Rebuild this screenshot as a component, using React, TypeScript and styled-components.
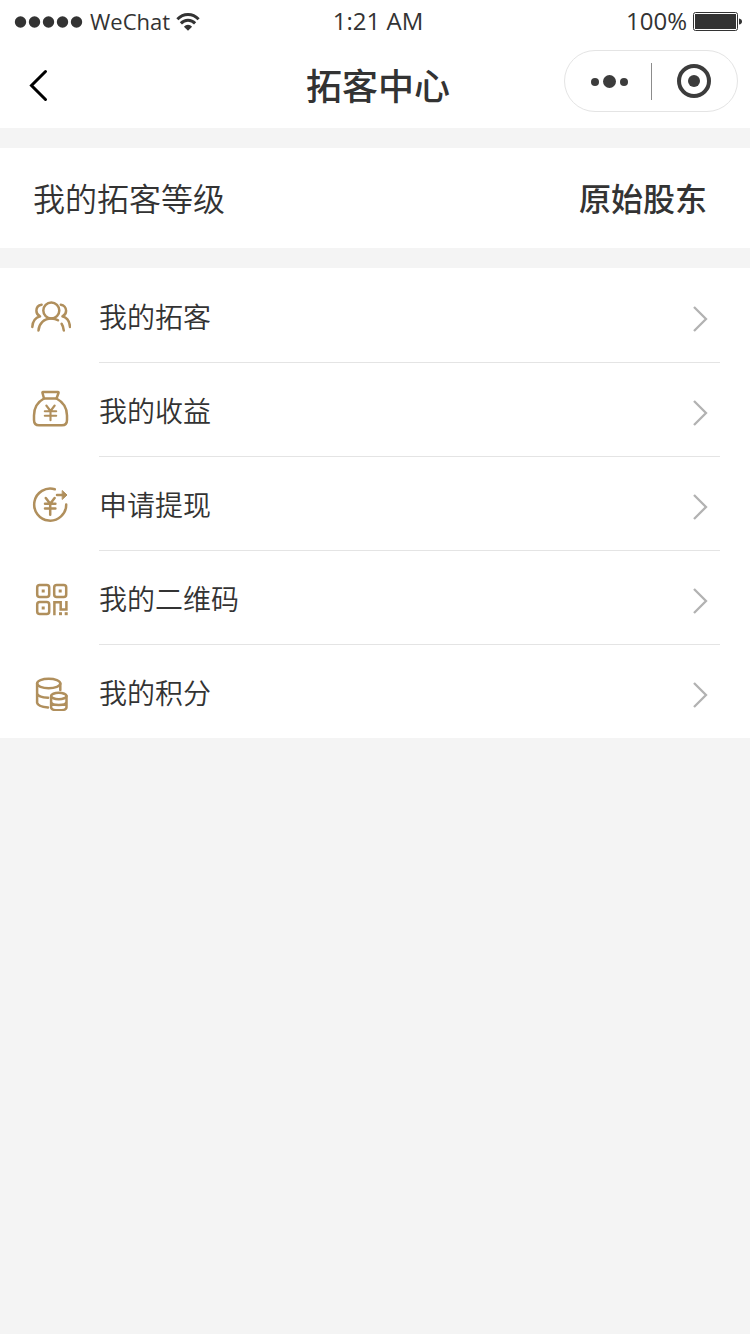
import React from "react";
import styled, { createGlobalStyle } from "styled-components";

const GlobalStyle = createGlobalStyle`
  * { box-sizing: border-box; }
  body {
    margin: 0;
    background: #f4f4f4;
    color: #333;
    font-family: "Noto Sans", "Noto Sans CJK SC", sans-serif;
  }
`;

const Header = styled.header`
  background: #fff;
`;

const StatusBar = styled.div`
  display: grid;
  grid-template-columns: 1fr auto 1fr;
  align-items: center;
  height: 44px;
  padding: 0 8px 0 14px;
`;

const StatusGroup = styled.div<{ $end?: boolean }>`
  display: flex;
  align-items: center;
  justify-content: ${(p) => (p.$end ? "flex-end" : "flex-start")};
  gap: 6px;
`;

const StatusText = styled.span<{ $small?: boolean }>`
  padding-bottom: 2px;
  font-family: "Open Sans", sans-serif;
  font-size: ${(p) => (p.$small ? 22 : 24)}px;
  line-height: 32px;
`;

const NavBar = styled.div`
  display: grid;
  grid-template-columns: 1fr auto 1fr;
  align-items: center;
  height: 84px;
  padding: 0 12px 0 18px;
`;

const IconButton = styled.button`
  display: flex;
  align-items: center;
  justify-content: center;
  height: 60px;
  padding: 0;
  border: 0;
  background: none;
  color: #3c3c3c;
  cursor: pointer;
`;

const BackButton = styled(IconButton)`
  width: 40px;
  color: #000;
`;

const Title = styled.h1`
  margin: 0;
  padding-bottom: 4px;
  font-family: "Noto Sans CJK SC", sans-serif;
  font-size: 36px;
  font-weight: 500;
  line-height: 52px;
`;

const Capsule = styled.div`
  display: flex;
  align-items: center;
  justify-self: end;
  width: 174px;
  height: 62px;
  margin-bottom: 10px;
  border: 1px solid #e4e4e4;
  border-radius: 31px;

  ${IconButton} {
    flex: 1;
  }
`;

const CapsuleDivider = styled.span`
  width: 1px;
  height: 37px;
  background: #8c8c8c;
`;

const Main = styled.main`
  display: flex;
  flex-direction: column;
  gap: 20px;
  padding-top: 20px;
`;

const LevelCard = styled.section`
  display: flex;
  align-items: center;
  justify-content: space-between;
  height: 100px;
  padding: 0 43px 2px 33px;
  background: #fff;
  font-family: "Noto Sans CJK SC", sans-serif;
  font-size: 32px;
  line-height: 48px;
`;

const LevelName = styled.span`
  font-weight: 350;
`;

const LevelValue = styled.strong`
  font-weight: 500;
`;

const Menu = styled.ul`
  margin: 0;
  padding: 0;
  list-style: none;
  background: #fff;
`;

const RowBody = styled.span`
  display: flex;
  flex: 1;
  align-items: center;
  justify-content: space-between;
  height: 94px;
  padding-right: 10px;
  border-top: 1px solid #e4e4e4;
`;

const MenuItem = styled.li`
  &:first-child ${RowBody} {
    border-top-color: transparent;
  }
`;

const RowLink = styled.a`
  display: flex;
  align-items: center;
  gap: 28px;
  padding: 0 30px 0 31px;
  color: #333;
  text-decoration: none;
`;

const RowLabel = styled.span`
  font-family: "Noto Sans CJK SC", sans-serif;
  font-size: 28px;
  font-weight: 350;
  line-height: 42px;
`;

const LineIcon = styled.svg`
  display: block;
  flex: none;
  fill: none;
  stroke: #b08f5c;
  stroke-width: 2.5;
  stroke-linecap: round;
  stroke-linejoin: round;
`;

const SignalDots = () => (
  <svg width="70" height="12" viewBox="0 0 70 12" fill="#333" aria-hidden="true">
    {[6, 20, 34, 48, 62].map((x) => (
      <circle key={x} cx={x + 0.5} cy="6" r="5.700" />
    ))}
  </svg>
);

const Wifi = () => (
  <svg width="24" height="20" viewBox="0 0 26 20" fill="none" stroke="#333" strokeWidth="3.200" aria-hidden="true">
    <path d="M1.500 7C8 .2 18 .2 24.500 7" />
    <path d="M5.300 11.500C9.500 7.100 16.500 7.100 20.700 11.500" />
    <path d="M8.600 15.200C11 12.300 15 12.300 17.400 15.200L13 19.500Z" fill="#333" stroke="none" />
  </svg>
);

const Battery = () => (
  <svg width="49" height="20" viewBox="0 0 49 20" aria-hidden="true">
    <rect x=".5" y=".5" width="44" height="18" rx="2" fill="none" stroke="#333" />
    <rect x="2" y="2" width="41" height="15" fill="#333" />
    <path d="M46 6.500Q49 7 49 9.500T46 12.500Z" fill="#333" />
  </svg>
);

const PeopleIcon = () => (
  <>
    <circle cx="20.300" cy="15.500" r="8" />
    <path d="M7.500 35.500C8 28.500 13 23.600 20.300 23.600c2.600 0 4.800.5 6.700 1.700M30.600 28.800c1.300 2 2 3.900 2.200 6.700" />
    <path d="M10.600 9.700C7.400 10.200 5.400 12.800 5.400 15.800c0 2.500 1.400 4.500 3.600 5.600M9 21.400C4.300 22.600 1.600 26.500 1.300 32M29.800 9.700c3.200.5 5.300 3.100 5.300 6.100 0 2.500-1.400 4.500-3.600 5.600M31.500 21.400c4.500 1.200 7.200 5.100 7.500 10.600" />
  </>
);

const MoneyBagIcon = () => (
  <>
    <path d="M13 9.500 11.500 4Q11.200 3 12 3H27Q27.800 3 27.500 4L25.500 9.500Z" />
    <path d="M13 9.500C6.500 13 3 19 3 26.500v4.500Q3 36.300 8 36.300H31Q36 36.300 36 31V26.500C36 19 32 13 25.500 9.500" />
    <path strokeWidth="2.100" d="M15.300 16.500l4.200 5.500 4.200-5.500M13.800 22.200H25.200M13.800 26.800H25.200M19.500 22.200v9" />
  </>
);

const WithdrawIcon = () => (
  <>
    <path d="M23.800 6.300A16 16 0 1 0 35.200 21.500" />
    <path d="M26 12H34" />
    <path d="M31.500 7.800 36 12l-4.500 4.200Z" fill="#b08f5c" strokeWidth="1" />
    <path d="M14.800 15l4.400 5.700 4.400-5.700M14 20.700H24.400M14 25.600H24.400M19.200 20.700v11" />
  </>
);

const QrIcon = () => (
  <>
    <rect x="6.200" y="8" width="12" height="12" rx="2.500" />
    <rect x="23.200" y="8" width="12" height="12" rx="2.500" />
    <rect x="6.200" y="25" width="12" height="12" rx="2.500" />
    <g fill="#b08f5c" stroke="none">
      <rect x="10.700" y="12.500" width="3" height="3" />
      <rect x="27.700" y="12.500" width="3" height="3" />
      <rect x="10.700" y="29.500" width="3" height="3" />
      <rect x="28" y="35.200" width="3" height="3" />
      <rect x="33.700" y="35.200" width="3" height="3" />
    </g>
    <path strokeLinecap="butt" strokeLinejoin="miter" d="M23.400 38.200V25.200H29.700v7.300H35.400V24" />
  </>
);

const CoinsIcon = () => (
  <>
    <ellipse cx="17.700" cy="12.500" rx="11.600" ry="4.700" />
    <path d="M6.100 12.500V31.800C6.600 34.500 11 36 17 36.400M6.100 22.500c.7 2.500 5 4 11 4.300M29.300 12.500V19" />
    <ellipse cx="27.800" cy="25" rx="7.700" ry="3.200" />
    <path d="M20.100 25v11.200c0 4.200 15.400 4.200 15.400 0V25M20.100 30.800c0 4.200 15.400 4.200 15.400 0" />
  </>
);

const Chevron = () => (
  <svg width="18" height="34" viewBox="0 0 18 34" fill="none" stroke="#b2b2b2" strokeWidth="2.300" aria-hidden="true">
    <path d="M2 8l12 12L2 32" />
  </svg>
);

const items = [
  { label: "我的拓客", href: "#customers", Icon: PeopleIcon },
  { label: "我的收益", href: "#earnings", Icon: MoneyBagIcon },
  { label: "申请提现", href: "#withdraw", Icon: WithdrawIcon },
  { label: "我的二维码", href: "#qrcode", Icon: QrIcon },
  { label: "我的积分", href: "#points", Icon: CoinsIcon },
];

export default function App() {
  return (
    <>
      <GlobalStyle />
      <Header>
        <StatusBar>
          <StatusGroup>
            <SignalDots />
            <StatusText $small>WeChat</StatusText>
            <Wifi />
          </StatusGroup>
          <StatusText>1:21 AM</StatusText>
          <StatusGroup $end>
            <StatusText>100%</StatusText>
            <Battery />
          </StatusGroup>
        </StatusBar>
        <NavBar>
          <BackButton type="button" aria-label="返回">
            <svg width="20" height="34" viewBox="0 0 20 34" fill="none" stroke="currentColor" strokeWidth="3" strokeLinecap="round">
              <path d="M17.500 2.500 3.500 16.500 17.500 30.500" />
            </svg>
          </BackButton>
          <Title>拓客中心</Title>
          <Capsule>
            <IconButton type="button" aria-label="更多">
              <svg width="42" height="16" viewBox="0 0 42 16" fill="currentColor">
                <circle cx="8" cy="9" r="4" />
                <circle cx="22.500" cy="8.500" r="6.500" />
                <circle cx="37" cy="9" r="4" />
              </svg>
            </IconButton>
            <CapsuleDivider />
            <IconButton type="button" aria-label="关闭">
              <svg width="34" height="34" viewBox="0 0 34 34" fill="none">
                <circle cx="17" cy="17" r="15" stroke="currentColor" strokeWidth="4" />
                <circle cx="17" cy="17" r="6" fill="currentColor" />
              </svg>
            </IconButton>
          </Capsule>
        </NavBar>
      </Header>
      <Main>
        <LevelCard>
          <LevelName>我的拓客等级</LevelName>
          <LevelValue>原始股东</LevelValue>
        </LevelCard>
        <nav>
          <Menu>
            {items.map(({ label, href, Icon }) => (
              <MenuItem key={label}>
                <RowLink href={href}>
                  <LineIcon width="40" height="40" viewBox="0 0 40 40" aria-hidden="true">
                    <Icon />
                  </LineIcon>
                  <RowBody>
                    <RowLabel>{label}</RowLabel>
                    <Chevron />
                  </RowBody>
                </RowLink>
              </MenuItem>
            ))}
          </Menu>
        </nav>
      </Main>
    </>
  );
}
